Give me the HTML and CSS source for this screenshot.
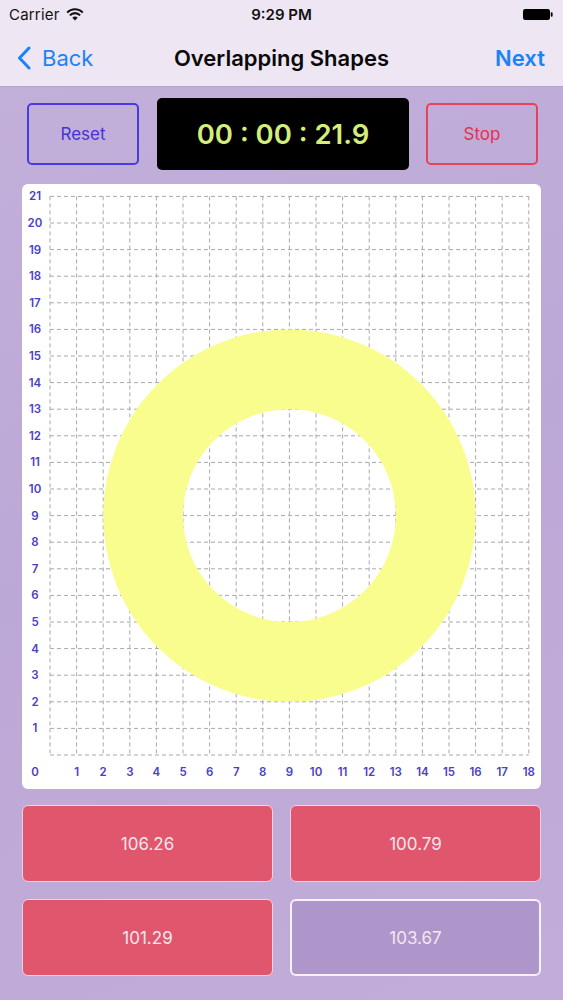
FILE: index.html
```html
<!DOCTYPE html>
<html>
<head>
<meta charset="utf-8">
<link rel="stylesheet" href="styles.css">
</head>
<body>
<div class="screen">
  <header class="top">
    <div class="status">
      <div class="status-left">
        <span class="carrier">Carrier</span>
        <svg class="wifi" width="18" height="13" viewBox="0 0 18 13">
          <path d="M1.2 4.6 A10.6 10.6 0 0 1 16.8 4.6" fill="none" stroke="#111" stroke-width="2.1"/>
          <path d="M3.9 7.4 A6.8 6.8 0 0 1 14.1 7.4" fill="none" stroke="#111" stroke-width="2.1"/>
          <path d="M9 12.6 L6.3 9.8 A3.8 3.8 0 0 1 11.7 9.8 Z" fill="#111"/>
        </svg>
      </div>
      <span class="clock">9:29 PM</span>
      <svg class="battery" width="32" height="13" viewBox="0 0 32 13">
        <rect x="1" y="1" width="27" height="11" rx="2.2" fill="#000"/>
        <rect x="28.8" y="4.2" width="1.8" height="4.6" rx="0.8" fill="#000"/>
      </svg>
    </div>
    <nav class="navbar">
      <div class="nav-back">
        <svg class="chev" width="14" height="24" viewBox="0 0 14 24">
          <path d="M12 2 L2.5 12 L12 22" fill="none" stroke="#1a82fb" stroke-width="3" stroke-linecap="round" stroke-linejoin="round"/>
        </svg>
        <span>Back</span>
      </div>
      <div class="nav-title">Overlapping Shapes</div>
      <div class="nav-next">Next</div>
    </nav>
  </header>

  <section class="controls">
    <button class="btn btn-reset">Reset</button>
    <div class="timer">00 : 00 : 21.9</div>
    <button class="btn btn-stop">Stop</button>
  </section>

  <section class="card">
    <svg class="graph" width="519" height="605" viewBox="0 0 519 605">
      <path class="grid" d="M28 12.4V571 M54.6 12.4V571 M81.2 12.4V571 M107.8 12.4V571 M134.4 12.4V571 M161 12.4V571 M187.6 12.4V571 M214.2 12.4V571 M240.8 12.4V571 M267.4 12.4V571 M294 12.4V571 M320.6 12.4V571 M347.2 12.4V571 M373.8 12.4V571 M400.4 12.4V571 M427 12.4V571 M453.6 12.4V571 M480.2 12.4V571 M506.8 12.4V571
      M28 571H506.8 M28 544.4H506.8 M28 517.8H506.8 M28 491.2H506.8 M28 464.6H506.8 M28 438H506.8 M28 411.4H506.8 M28 384.8H506.8 M28 358.2H506.8 M28 331.6H506.8 M28 305H506.8 M28 278.4H506.8 M28 251.8H506.8 M28 225.2H506.8 M28 198.6H506.8 M28 172H506.8 M28 145.4H506.8 M28 118.8H506.8 M28 92.2H506.8 M28 65.6H506.8 M28 39H506.8 M28 12.4H506.8"/>
      <circle cx="267.4" cy="331.6" r="146.3" fill="none" stroke="#f9fd8e" stroke-width="79.8"/>
      <g class="labels">
        <text x="13" y="12.4">21</text>
        <text x="13" y="39">20</text>
        <text x="13" y="65.6">19</text>
        <text x="13" y="92.2">18</text>
        <text x="13" y="118.8">17</text>
        <text x="13" y="145.4">16</text>
        <text x="13" y="172">15</text>
        <text x="13" y="198.6">14</text>
        <text x="13" y="225.2">13</text>
        <text x="13" y="251.8">12</text>
        <text x="13" y="278.4">11</text>
        <text x="13" y="305">10</text>
        <text x="13" y="331.6">9</text>
        <text x="13" y="358.2">8</text>
        <text x="13" y="384.8">7</text>
        <text x="13" y="411.4">6</text>
        <text x="13" y="438">5</text>
        <text x="13" y="464.6">4</text>
        <text x="13" y="491.2">3</text>
        <text x="13" y="517.8">2</text>
        <text x="13" y="544.4">1</text>
        <text x="13" y="588">0</text>
        <text x="54.6" y="588">1</text>
        <text x="81.2" y="588">2</text>
        <text x="107.8" y="588">3</text>
        <text x="134.4" y="588">4</text>
        <text x="161" y="588">5</text>
        <text x="187.6" y="588">6</text>
        <text x="214.2" y="588">7</text>
        <text x="240.8" y="588">8</text>
        <text x="267.4" y="588">9</text>
        <text x="294" y="588">10</text>
        <text x="320.6" y="588">11</text>
        <text x="347.2" y="588">12</text>
        <text x="373.8" y="588">13</text>
        <text x="400.4" y="588">14</text>
        <text x="427" y="588">15</text>
        <text x="453.6" y="588">16</text>
        <text x="480.2" y="588">17</text>
        <text x="506.8" y="588">18</text>
      </g>
    </svg>
  </section>

  <section class="answers">
    <button class="answer wrong">106.26</button>
    <button class="answer wrong">100.79</button>
    <button class="answer wrong">101.29</button>
    <button class="answer right">103.67</button>
  </section>
</div>
</body>
</html>
```

FILE: styles.css
```css
* { box-sizing: border-box; }
html, body { margin: 0; padding: 0; }
body {
  width: 563px;
  height: 1000px;
  overflow: hidden;
  font-family: Inter, "Liberation Sans", Arial, sans-serif;
  background: linear-gradient(160deg, #c3b0da 0%, #bca8d6 50%, #c2acd9 100%);
}
.screen {
  width: 563px;
  height: 1000px;
  display: flex;
  flex-direction: column;
}
.top {
  height: 87px;
  background: #efe6f4;
  border-bottom: 1px solid #b5a3cb;
  display: flex;
  flex-direction: column;
}
.status {
  height: 29px;
  display: flex;
  align-items: center;
  justify-content: space-between;
  padding: 0 9px 0 9px;
  position: relative;
}
.status-left {
  display: flex;
  align-items: center;
  gap: 6px;
}
.carrier {
  font-size: 15px;
  color: #111;
  letter-spacing: 0.2px;
}
.wifi { margin-top: -1px; }
.clock {
  position: absolute;
  left: 0;
  right: 0;
  text-align: center;
  font-size: 15px;
  font-weight: 600;
  color: #111;
  pointer-events: none;
}
.navbar {
  flex: 1;
  display: flex;
  align-items: center;
  justify-content: space-between;
  padding: 0 18px 0 17px;
  position: relative;
}
.nav-back {
  display: flex;
  align-items: center;
  gap: 11px;
  color: #1a82fb;
  font-size: 22px;
}
.chev { margin-top: 1px; }
.nav-title {
  position: absolute;
  left: 0;
  right: 0;
  text-align: center;
  font-size: 22px;
  font-weight: 600;
  color: #0a0a0a;
  pointer-events: none;
}
.nav-next {
  color: #1a82fb;
  font-size: 22px;
  font-weight: 600;
}
.controls {
  margin-top: 11px;
  height: 72px;
  display: flex;
  align-items: center;
  padding-left: 27px;
}
.btn {
  width: 112px;
  height: 62px;
  background: transparent;
  border-radius: 5px;
  font-family: inherit;
  font-size: 17px;
  padding: 0;
}
.btn-reset {
  border: 2px solid #4a3be0;
  color: #4434d4;
}
.btn-stop {
  border: 2px solid #e64259;
  color: #e62f50;
  margin-left: 17px;
}
.timer {
  width: 252px;
  height: 72px;
  margin-left: 18px;
  background: #000;
  border-radius: 5px;
  display: flex;
  align-items: center;
  justify-content: center;
  color: #d3ee7b;
  font-size: 27.5px;
  font-weight: 600;
  letter-spacing: 0;
}
.card {
  margin: 14px 0 0 22px;
  width: 519px;
  height: 605px;
  background: #fff;
  border-radius: 6px;
}
.graph { display: block; }
.grid {
  fill: none;
  stroke: #a8a8a8;
  stroke-width: 1;
  stroke-dasharray: 4 3;
}
.labels text {
  font-family: Inter, "Liberation Sans", Arial, sans-serif;
  font-size: 11.5px;
  font-weight: 600;
  fill: #4b40c4;
  text-anchor: middle;
  dominant-baseline: central;
}
.answers {
  margin: 16px 0 0 22px;
  width: 519px;
  display: grid;
  grid-template-columns: 251px 251px;
  grid-auto-rows: 77px;
  column-gap: 17px;
  row-gap: 17px;
}
.answer {
  border-radius: 6px;
  font-family: inherit;
  font-size: 17px;
  color: #f7e6ee;
  padding: 0;
}
.answer.wrong {
  background: #e0566d;
  border: 1.5px solid #f6cfe0;
}
.answer.right {
  background: #ae95ca;
  border: 2px solid #f7f1fb;
}
```
